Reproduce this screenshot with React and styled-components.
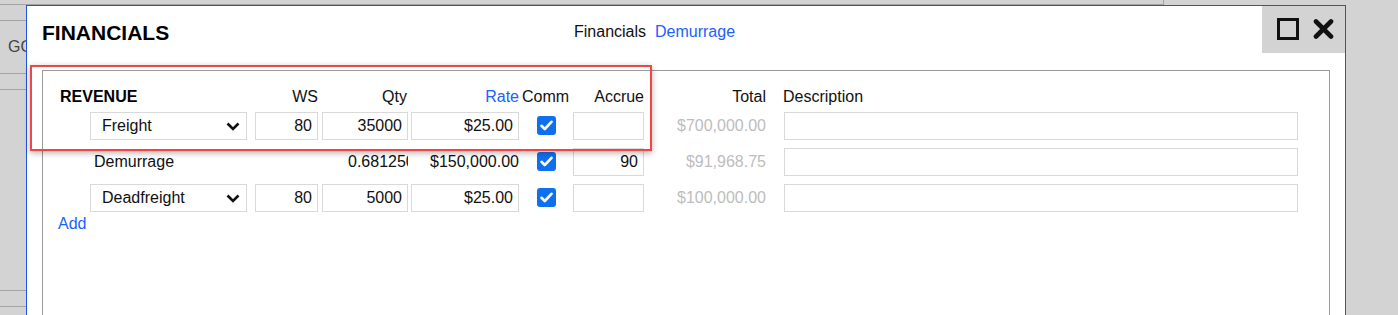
import React from 'react'
import styled, { createGlobalStyle } from 'styled-components'

const GlobalStyle = createGlobalStyle`
  html, body {
    margin: 0;
    padding: 0;
    height: 315px;
    overflow: hidden;
    background: #d3d3d3;
    font-family: "Liberation Sans", Arial, sans-serif;
    color: #111;
  }
`

const rows = [
  { kind: 'select', name: 'Freight', ws: '80', qty: '35000', rate: '$25.00', comm: true, accrue: '', total: '$700,000.00' },
  { kind: 'text', name: 'Demurrage', ws: '', qty: '0.681250', rate: '$150,000.00', comm: true, accrue: '90', total: '$91,968.75' },
  { kind: 'select', name: 'Deadfreight', ws: '80', qty: '5000', rate: '$25.00', comm: true, accrue: '', total: '$100,000.00' },
]

function Chevron() {
  return (
    <svg width="14" height="9" viewBox="0 0 14 9">
      <polyline points="1.5,1.5 7,7 12.5,1.5" fill="none" stroke="#111" strokeWidth="2.6" />
    </svg>
  )
}

function Check() {
  return (
    <svg width="13" height="11" viewBox="0 0 13 11">
      <polyline points="1.5,5.8 4.8,9 11.5,1.8" fill="none" stroke="#fff" strokeWidth="2.6" strokeLinecap="round" strokeLinejoin="round" />
    </svg>
  )
}

function App() {
  return (
    <Page>
      <GlobalStyle />

      {/* page behind the dialog */}
      <TopBar />
      <SideList>
        <SideRow h={15} />
        <SideRow h={52}><SideText>GO</SideText></SideRow>
        <SideRow h={15} />
        <SideRow h={200} />
        <SideRow h={15} />
      </SideList>

      <Modal>
        <ModalHeader>
          <Title>FINANCIALS</Title>
          <Tabs>
            <Tab>Financials</Tab>
            <Tab link>Demurrage</Tab>
          </Tabs>
          <Controls>
            <svg width="22" height="22" viewBox="0 0 22 22">
              <rect x="1.5" y="1.5" width="19" height="19" fill="none" stroke="#111" strokeWidth="3" />
            </svg>
            <svg width="21" height="20" viewBox="0 0 21 20">
              <path d="M3 2.5 L18 17.5 M18 2.5 L3 17.5" stroke="#111" strokeWidth="4.6" strokeLinecap="round" />
            </svg>
          </Controls>
        </ModalHeader>

        <Panel>
          <HeadRow>
            <Section>REVENUE</Section>
            <HeadCell>WS</HeadCell>
            <HeadCell>Qty</HeadCell>
            <HeadCell link>Rate</HeadCell>
            <HeadCell left>Comm</HeadCell>
            <HeadCell>Accrue</HeadCell>
            <HeadCell pad={18}>Total</HeadCell>
            <HeadCell left>Description</HeadCell>
          </HeadRow>

          {rows.map((item, index) => (
            <Row key={index}>
              <span />
              {item.kind === 'select' ? (
                <SelectBox>
                  {item.name}
                  <Chevron />
                </SelectBox>
              ) : (
                <Label>{item.name}</Label>
              )}
              {item.kind === 'select' ? <Field w={63} value={item.ws} readOnly /> : <span />}
              {item.kind === 'select' ? <Field w={86} value={item.qty} readOnly /> : <Clip>{item.qty}</Clip>}
              {item.kind === 'select' ? <Field w={108} value={item.rate} readOnly /> : <Plain>{item.rate}</Plain>}
              <CheckCell>
                <CheckBox checked={item.comm}>{item.comm && <Check />}</CheckBox>
              </CheckCell>
              <Field w={71} value={item.accrue} readOnly />
              <Total>{item.total}</Total>
              <Field w={514} value="" readOnly />
            </Row>
          ))}

          <AddLink>Add</AddLink>
        </Panel>
      </Modal>

      <Highlight />
    </Page>
  )
}

export default App

const Page = styled.div`
  position: relative;
  width: 1398px;
  height: 315px;
  overflow: hidden;
  background: #d3d3d3;
`

const TopBar = styled.div`
  width: 1163px;
  height: 4px;
  border-bottom: 1px solid #a3a3a3;
  border-right: 1px solid #a3a3a3;
`

const SideList = styled.div`
  display: flex;
  flex-direction: column;
  width: 200px;
`

const SideRow = styled.div`
  height: ${p => p.h}px;
  border-bottom: 1px solid #a3a3a3;
  display: flex;
  align-items: center;
`

const SideText = styled.span`
  padding-left: 8px;
  font-size: 16px;
  color: #444;
`

const Modal = styled.div`
  position: absolute;
  left: 26px;
  top: 5px;
  width: 1318px;
  height: 400px;
  background: #fff;
  border: 1px solid #1e54e6;
`

const ModalHeader = styled.div`
  display: flex;
  align-items: flex-start;
  height: 47px;
`

const Title = styled.h1`
  margin: 15px 0 0 15px;
  width: 532px;
  font-size: 21px;
  line-height: 24px;
  font-weight: bold;
  color: #000;
`

const Tabs = styled.div`
  display: flex;
  gap: 9px;
  margin-top: 17px;
`

const Tab = styled.span`
  font-size: 16px;
  line-height: 18px;
  color: ${p => (p.link ? '#2060ff' : '#111')};
`

const Controls = styled.div`
  margin-left: auto;
  width: 83px;
  height: 47px;
  background: #d3d3d3;
  display: flex;
  align-items: center;
  gap: 14px;
  padding-left: 15px;
  box-sizing: border-box;
  padding-bottom: 1px;
`

const Panel = styled.div`
  margin: 17px 15px 0;
  height: 320px;
  border: 1px solid #9a9a9a;
  padding: 17px 0 0 15px;
  box-sizing: border-box;
`

const columns = '32px 165px 67px 89px 112px 50px 75px 136px 514px'

const HeadRow = styled.div`
  display: grid;
  grid-template-columns: ${columns};
  height: 18px;
  line-height: 18px;
  font-size: 16px;
  margin-bottom: 6px;
`

const Section = styled.div`
  grid-column: 1 / span 2;
  padding-left: 2px;
  font-weight: bold;
  color: #000;
`

const HeadCell = styled.div`
  text-align: ${p => (p.left ? 'left' : 'right')};
  padding-right: ${p => (p.left ? 0 : p.pad ?? 4)}px;
  margin-left: ${p => (p.left ? -1 : 0)}px;
  color: ${p => (p.link ? '#2060ff' : '#111')};
  white-space: nowrap;
`

const Row = styled.div`
  display: grid;
  grid-template-columns: ${columns};
  height: 28px;
  align-items: center;
  margin-bottom: 8px;
  font-size: 16px;
`

const SelectBox = styled.div`
  width: 157px;
  height: 28px;
  box-sizing: border-box;
  border: 1px solid #d9d9d9;
  display: flex;
  align-items: center;
  justify-content: space-between;
  padding: 0 6px 0 11px;
  color: #111;
`

const Label = styled.div`
  padding-left: 4px;
  color: #111;
`

const Field = styled.input`
  width: ${p => p.w}px;
  height: 28px;
  box-sizing: border-box;
  border: 1px solid #d9d9d9;
  padding: 0 5px;
  margin: 0;
  font-family: inherit;
  font-size: 16px;
  color: #111;
  text-align: right;
  outline: none;
  background: #fff;
`

const Clip = styled.div`
  width: 86px;
  box-sizing: border-box;
  padding-left: 26px;
  overflow: hidden;
  white-space: nowrap;
  color: #111;
`

const Plain = styled.div`
  width: 108px;
  text-align: right;
  color: #111;
`

const CheckCell = styled.div`
  display: flex;
  padding-left: 14px;
`

const CheckBox = styled.span`
  width: 19px;
  height: 19px;
  border-radius: 3px;
  background: ${p => (p.checked ? '#0f70ef' : '#fff')};
  display: flex;
  align-items: center;
  justify-content: center;
  margin-top: -1px;
`

const Total = styled.div`
  text-align: right;
  padding-right: 18px;
  color: #bdbdbd;
`

const AddLink = styled.div`
  margin-top: -5px;
  font-size: 16px;
  line-height: 18px;
  color: #2060ff;
`

const Highlight = styled.div`
  position: absolute;
  left: 30px;
  top: 65px;
  width: 622px;
  height: 86px;
  box-sizing: border-box;
  border: 2px solid #f04646;
  box-shadow: 0 2px 6px rgba(0, 0, 0, 0.3);
  pointer-events: none;
`
